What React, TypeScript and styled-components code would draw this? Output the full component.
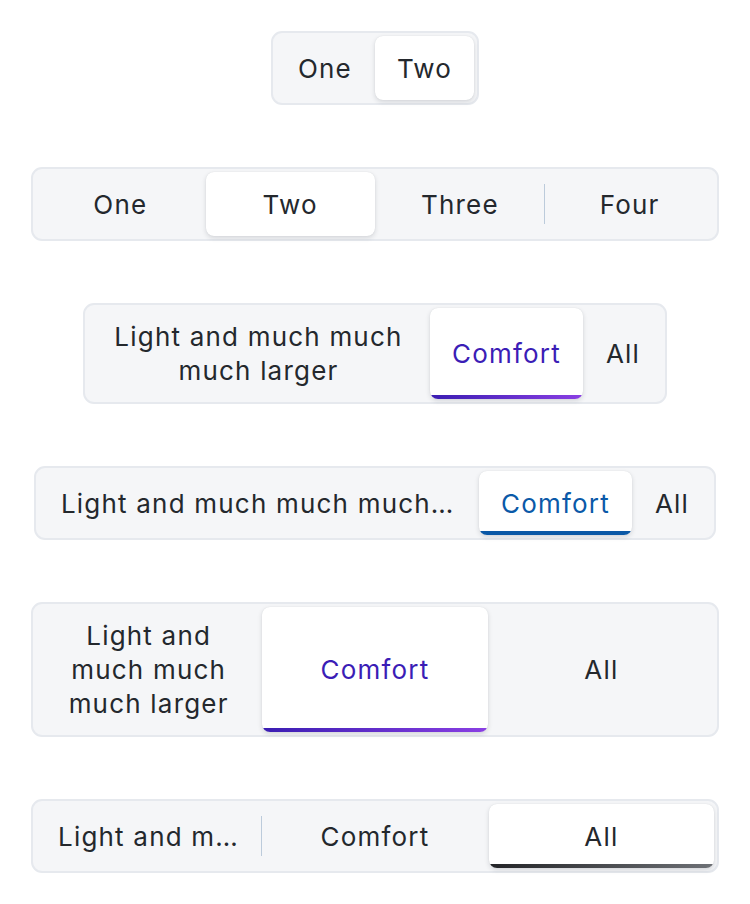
import React from "react";
import styled, { createGlobalStyle, css } from "styled-components";

const GlobalStyle = createGlobalStyle`
  html, body { margin: 0; padding: 0; background: #ffffff; }
  body { font-family: Inter, "Noto Sans", "Liberation Sans", sans-serif; }
`;

type Accent = "none" | "purple" | "blue" | "dark";

const accentText: Record<Accent, string> = {
  none: "#24282d",
  purple: "#3b1db6",
  blue: "#0a59a8",
  dark: "#24282d",
};

const accentBar: Record<Accent, string> = {
  none: "transparent",
  purple: "linear-gradient(90deg, #3a1db2 0%, #8a3fe3 100%)",
  blue: "#0a58a6",
  dark: "linear-gradient(90deg, #232427 0%, #6e7176 100%)",
};

const Page = styled.main`
  display: flex;
  flex-direction: column;
  align-items: center;
  gap: 62px;
  padding: 31px 31px 40px;
`;

const Control = styled.div<{ $full?: boolean }>`
  display: flex;
  align-items: stretch;
  align-self: ${(p) => (p.$full ? "stretch" : "center")};
  box-sizing: border-box;
  border: 2px solid #e6e9ee;
  border-radius: 11px;
  background: #f5f6f8;
  padding: 3px;
`;

const Segment = styled.button<{
  $selected?: boolean;
  $equal?: boolean;
  $maxWidth?: number;
  $accent: Accent;
}>`
  position: relative;
  overflow: hidden;
  display: flex;
  align-items: center;
  justify-content: center;
  box-sizing: border-box;
  min-height: 64px;
  min-width: 0;
  padding: 12px 22px 11px;
  border: none;
  border-radius: 8px;
  background: transparent;
  font-family: Inter, "Noto Sans", "Liberation Sans", sans-serif;
  font-size: 26px;
  line-height: 34px;
  letter-spacing: 1.2px;
  font-weight: 400;
  color: #24282d;
  text-align: center;
  cursor: pointer;
  flex: ${(p) => (p.$equal ? "1 1 0" : "0 1 auto")};
  ${(p) => (p.$maxWidth ? css`max-width: ${p.$maxWidth}px;` : "")}
  ${(p) =>
    p.$selected &&
    css`
      background: #ffffff;
      color: ${accentText[p.$accent]};
      box-shadow: 0 2px 5px rgba(20, 30, 45, 0.14), 0 0 1px rgba(20, 30, 45, 0.12);
    `}
`;

const Label = styled.span<{ $truncate?: boolean }>`
  min-width: 0;
  ${(p) =>
    p.$truncate &&
    css`
      white-space: nowrap;
      overflow: hidden;
      text-overflow: ellipsis;
    `}
`;

const Bar = styled.span<{ $accent: Accent }>`
  position: absolute;
  left: 0;
  right: 0;
  bottom: 0;
  height: 4px;
  background: ${(p) => accentBar[p.$accent]};
`;

const Divider = styled.span<{ $hidden?: boolean }>`
  flex: none;
  width: 1px;
  height: 40px;
  align-self: center;
  background: ${(p) => (p.$hidden ? "transparent" : "#bccbdb")};
`;

type Item = { label: string; maxWidth?: number };

function SegmentedControl({
  items,
  selected,
  full,
  equal,
  truncate,
  accent = "none",
}: {
  items: Item[];
  selected: number;
  full?: boolean;
  equal?: boolean;
  truncate?: boolean;
  accent?: Accent;
}) {
  return (
    <Control $full={full}>
      {items.map((it, i) => {
        const nodes: React.ReactNode[] = [];
        if (i > 0) {
          const show = i - 1 !== selected && i !== selected;
          nodes.push(<Divider key={`d${i}`} $hidden={!show} />);
        }
        const isSel = i === selected;
        nodes.push(
          <Segment
            key={it.label}
            $selected={isSel}
            $equal={equal}
            $maxWidth={it.maxWidth}
            $accent={accent}
          >
            <Label $truncate={truncate}>{it.label}</Label>
            {isSel && accent !== "none" && <Bar $accent={accent} />}
          </Segment>
        );
        return nodes;
      })}
    </Control>
  );
}

const longLabel = "Light and much much much larger";

export default function App() {
  return (
    <>
      <GlobalStyle />
      <Page>
        <SegmentedControl items={[{ label: "One" }, { label: "Two" }]} selected={1} />
        <SegmentedControl
          items={[{ label: "One" }, { label: "Two" }, { label: "Three" }, { label: "Four" }]}
          selected={1}
          full
          equal
        />
        <SegmentedControl
          items={[{ label: longLabel, maxWidth: 341 }, { label: "Comfort" }, { label: "All" }]}
          selected={1}
          accent="purple"
        />
        <SegmentedControl
          items={[{ label: longLabel, maxWidth: 439 }, { label: "Comfort" }, { label: "All" }]}
          selected={1}
          accent="blue"
          truncate
        />
        <SegmentedControl
          items={[{ label: longLabel }, { label: "Comfort" }, { label: "All" }]}
          selected={1}
          accent="purple"
          full
          equal
        />
        <SegmentedControl
          items={[{ label: longLabel }, { label: "Comfort" }, { label: "All" }]}
          selected={2}
          accent="dark"
          full
          equal
          truncate
        />
      </Page>
    </>
  );
}
